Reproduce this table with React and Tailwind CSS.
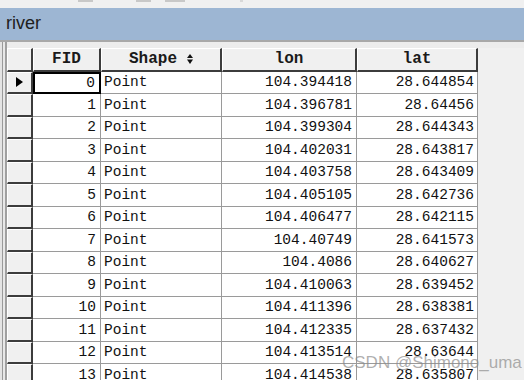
import React from "react";

const rows = [
  [0, "104.394418", "28.644854"],
  [1, "104.396781", "28.64456"],
  [2, "104.399304", "28.644343"],
  [3, "104.402031", "28.643817"],
  [4, "104.403758", "28.643409"],
  [5, "104.405105", "28.642736"],
  [6, "104.406477", "28.642115"],
  [7, "104.40749", "28.641573"],
  [8, "104.4086", "28.640627"],
  [9, "104.410063", "28.639452"],
  [10, "104.411396", "28.638381"],
  [11, "104.412335", "28.637432"],
  [12, "104.413514", "28.63644"],
  [13, "104.414538", "28.635807"],
];

const mono = { fontFamily: '"Liberation Mono", monospace' };

function HeaderCell({ w, children }) {
  return (
    <div
      className={`${w} h-full flex items-center justify-center bg-[#f0f0f0] border-t border-l border-t-white border-l-white border-r-2 border-b-2 border-r-[#3c3c3c] border-b-[#3c3c3c] text-[16px] font-bold text-[#1a1a1a] leading-none`}
      style={mono}
    >
      {children}
    </div>
  );
}

function SortIcon() {
  return (
    <svg width="6" height="10" viewBox="0 0 6 10" className="ml-[10px]">
      <path d="M3 0 L6 4 L0 4 Z" fill="#111" />
      <path d="M0 5.5 L6 5.5 L3 10 Z" fill="#111" />
    </svg>
  );
}

export default function App() {
  return (
    <div className="w-[524px] h-[380px] overflow-hidden bg-[#f0f0f0] relative" style={{ fontFamily: '"Liberation Sans", sans-serif' }}>
      {/* top toolbar remnant */}
      <div className="h-[8px] bg-[#f0f0f0] relative">
        <div className="absolute top-0 left-[78px] w-[15px] h-[2px] bg-[#c8c8c8]" />
        <div className="absolute top-0 left-[136px] w-[15px] h-[2px] bg-[#c8c8c8]" />
        <div className="absolute top-0 left-[165px] w-[20px] h-[2px] bg-[#c8c8c8]" />
        <div className="absolute top-0 left-[240px] w-[3px] h-[2px] bg-[#d8d8d8]" />
      </div>
      {/* title bar */}
      <div className="h-[32px] bg-[#9db6d3] flex items-center pl-[6px] pb-[2px]">
        <span className="text-[18px] text-[#202020] leading-none">river</span>
      </div>
      <div className="h-[2px] bg-[#a8a8a8]" />
      <div className="flex">
        {/* left edge */}
        <div className="w-[7px] flex">
          <div className="w-[2px] bg-[#e4e4e4]" />
          <div className="w-[1px] bg-[#9a9a9a]" />
          <div className="w-[2px] bg-[#e8e8e8]" />
          <div className="w-[2px] bg-[#a0a0a0]" />
        </div>
        <div className="flex-1 flex flex-col">
          <div className="h-[6px] bg-[#ececec]" />
          {/* header */}
          <div className="flex h-[23.5px]">
            <HeaderCell w="w-[26px]">{""}</HeaderCell>
            <HeaderCell w="w-[68px]">FID</HeaderCell>
            <HeaderCell w="w-[121px]">
              <span>Shape</span>
              <SortIcon />
            </HeaderCell>
            <HeaderCell w="w-[135px]">lon</HeaderCell>
            <HeaderCell w="w-[121px]">lat</HeaderCell>
          </div>
          {rows.map(([fid, lon, lat], i) => (
            <div key={fid} className="flex h-[22.5px] shrink-0">
              <div className="w-[26px] h-full bg-[#f0f0f0] border-t border-l border-t-white border-l-white border-r-2 border-b-2 border-r-[#3c3c3c] border-b-[#3c3c3c] flex items-center justify-center">
                {i === 0 && (
                  <svg width="7" height="10" viewBox="0 0 7 10">
                    <path d="M0 0 L7 5 L0 10 Z" fill="#000" />
                  </svg>
                )}
              </div>
              <div
                className={`w-[68px] h-full bg-white flex items-center justify-end pr-[4px] text-[14.5px] text-[#111] leading-none ${
                  i === 0 ? "border-2 border-black" : "border-r-[1.5px] border-b-[1.5px] border-[#9a9a9a]"
                }`}
                style={mono}
              >
                {fid}
              </div>
              <div className="w-[121px] h-full bg-white border-r-[1.5px] border-b-[1.5px] border-[#9a9a9a] flex items-center pl-[3px] text-[14.5px] text-[#111] leading-none" style={mono}>
                Point
              </div>
              <div className="w-[135px] h-full bg-white border-r-[1.5px] border-b-[1.5px] border-[#9a9a9a] flex items-center justify-end pr-[4px] text-[14.5px] text-[#111] leading-none" style={mono}>
                {lon}
              </div>
              <div className="w-[121px] h-full bg-white border-r-[1.5px] border-b-[1.5px] border-[#9a9a9a] flex items-center justify-end pr-[3px] text-[14.5px] text-[#111] leading-none" style={mono}>
                {lat}
              </div>
            </div>
          ))}
        </div>
      </div>
      {/* watermark */}
      <div className="absolute left-[342px] top-[354px] text-[17px] text-[#8c8c8c]/70 leading-none whitespace-nowrap">
        CSDN @Shimono_uma
      </div>
    </div>
  );
}
